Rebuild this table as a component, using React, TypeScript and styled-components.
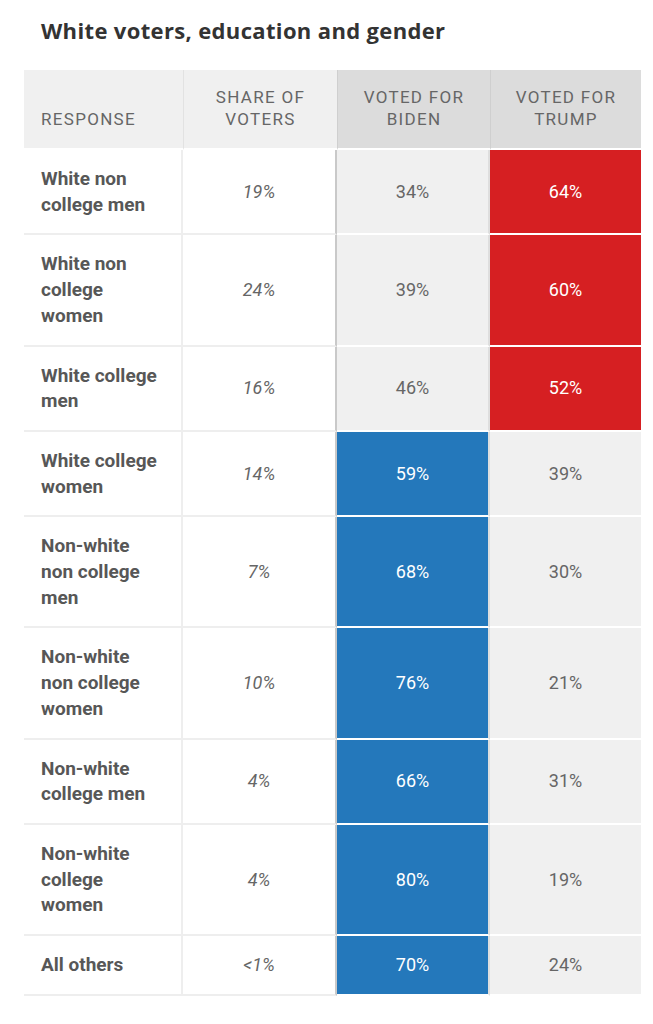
import React from 'react'
import styled, { createGlobalStyle, css } from 'styled-components'

type Winner = 'biden' | 'trump'

interface Row {
  label: string
  share: string
  biden: string
  trump: string
  winner: Winner
}

const rows: Row[] = [
  { label: 'White non college men', share: '19%', biden: '34%', trump: '64%', winner: 'trump' },
  { label: 'White non college women', share: '24%', biden: '39%', trump: '60%', winner: 'trump' },
  { label: 'White college men', share: '16%', biden: '46%', trump: '52%', winner: 'trump' },
  { label: 'White college women', share: '14%', biden: '59%', trump: '39%', winner: 'biden' },
  { label: 'Non-white non college men', share: '7%', biden: '68%', trump: '30%', winner: 'biden' },
  { label: 'Non-white non college women', share: '10%', biden: '76%', trump: '21%', winner: 'biden' },
  { label: 'Non-white college men', share: '4%', biden: '66%', trump: '31%', winner: 'biden' },
  { label: 'Non-white college women', share: '4%', biden: '80%', trump: '19%', winner: 'biden' },
  { label: 'All others', share: '<1%', biden: '70%', trump: '24%', winner: 'biden' },
]

const App: React.FC = () => (
  <>
    <GlobalStyle />
    <Page>
      <Title>White voters, education and gender</Title>
      <Grid>
        <HeadCell $tone="light" $align="left">Response</HeadCell>
        <HeadCell $tone="light" $divider="#e2e2e2">Share of voters</HeadCell>
        <HeadCell $tone="dark" $divider="#cfcfcf">Voted for Biden</HeadCell>
        <HeadCell $tone="dark" $divider="#cfcfcf">Voted for Trump</HeadCell>

        {rows.map((row) => (
          <React.Fragment key={row.label}>
            <LabelCell>{row.label}</LabelCell>
            <ShareCell>{row.share}</ShareCell>
            <VoteCell $fill={row.winner === 'biden' ? 'biden' : 'none'}>
              {row.biden}
            </VoteCell>
            <VoteCell $fill={row.winner === 'trump' ? 'trump' : 'none'} $last>
              {row.trump}
            </VoteCell>
          </React.Fragment>
        ))}
      </Grid>
    </Page>
  </>
)

const GlobalStyle = createGlobalStyle`
  body {
    margin: 0;
    background: #fff;
    font-family: Roboto, 'Liberation Sans', sans-serif;
  }
`

const Page = styled.div`
  width: 653px;
  padding: 15px 12px 28px 24px;
  box-sizing: border-box;
`

const Title = styled.h2`
  margin: 0 0 25px 17px;
  font-family: 'Open Sans', 'Liberation Sans', sans-serif;
  font-size: 22px;
  font-weight: 700;
  line-height: 30px;
  letter-spacing: 0.35px;
  color: #333;
`

const Grid = styled.div`
  display: grid;
  grid-template-columns: 159px 154px 153px 151px;
  width: 617px;
`

const HeadCell = styled.div<{
  $tone: 'light' | 'dark'
  $align?: 'left'
  $divider?: string
}>`
  display: flex;
  align-items: flex-end;
  justify-content: ${(p) => (p.$align === 'left' ? 'flex-start' : 'center')};
  text-align: ${(p) => (p.$align === 'left' ? 'left' : 'center')};
  padding: 16px ${(p) => (p.$align === 'left' ? '0 18px 17px' : '24px 18px')};
  min-height: 78px;
  box-sizing: border-box;
  background: ${(p) => (p.$tone === 'dark' ? '#dcdcdc' : '#f0f0f0')};
  border-bottom: 2px solid #fff;
  border-left: ${(p) => (p.$divider ? `1px solid ${p.$divider}` : 'none')};
  font-size: 17px;
  line-height: 22px;
  letter-spacing: 1.3px;
  text-transform: uppercase;
  color: #666;
`

const bodyCell = css`
  display: flex;
  align-items: center;
  padding: 16px 0;
  font-size: 18px;
  line-height: 25.7px;
`

const LabelCell = styled.div`
  ${bodyCell}
  padding: 16px 18px 16px 17px;
  font-size: 19px;
  font-weight: 700;
  color: #575757;
  border-bottom: 2px solid #eee;
  border-right: 2px solid #eee;
`

const ShareCell = styled.div`
  ${bodyCell}
  justify-content: center;
  font-style: italic;
  color: #666;
  border-bottom: 2px solid #eee;
  border-right: 2px solid #c9c9c9;
`

const fills = {
  biden: '#2478bb',
  trump: '#d61f22',
  none: '#f0f0f0',
}

const VoteCell = styled.div<{ $fill: 'biden' | 'trump' | 'none'; $last?: boolean }>`
  ${bodyCell}
  justify-content: center;
  background: ${(p) => fills[p.$fill]};
  color: ${(p) => (p.$fill === 'none' ? '#666' : '#fff')};
  border-bottom: 2px solid #fff;
  border-right: ${(p) => (p.$last ? 'none' : '2px solid #dedede')};
`

export default App
